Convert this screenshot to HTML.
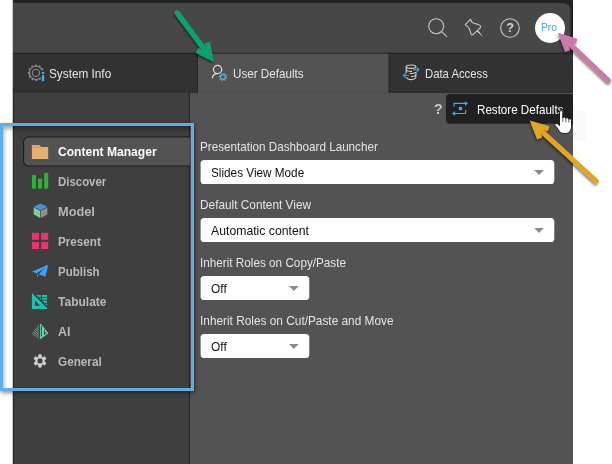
<!DOCTYPE html>
<html><head><meta charset="utf-8">
<style>
*{box-sizing:border-box;margin:0;padding:0}
html,body{width:612px;height:464px;overflow:hidden;background:#fff}
body{position:relative;font-family:"Liberation Sans",sans-serif;font-size:13px}
.a{position:absolute}
.t{position:absolute;white-space:nowrap;line-height:16px;height:16px;transform-origin:0 50%;color:#e4e4e4}
.b{font-weight:bold;color:#b8b8b8}
.k{color:#111}
.sel{position:absolute;left:200px;height:24px;background:#fff;border-radius:4px}
.car{position:absolute;width:0;height:0;border-left:5px solid transparent;border-right:5px solid transparent;border-top:5px solid #8c8c8c}
svg{position:absolute;left:0;top:0;overflow:visible}
</style></head><body>
<svg width="612" height="464" viewBox="0 0 612 464" shape-rendering="auto">
<rect x="12.9" y="0" width="560.1" height="464" fill="#535353"/>
<rect x="12.9" y="0" width="560.1" height="92.7" fill="#222"/>
<path d="M12.9 2.9H563A7.5 7.5 0 0 1 570.5 10.4V52.7H12.9Z" fill="#474747"/>
<rect x="12.9" y="53.7" width="184.4" height="38.05" fill="#323232"/>
<rect x="198" y="53.7" width="190.6" height="39.2" fill="#535353"/>
<rect x="389.4" y="53.7" width="183.6" height="38.05" fill="#323232"/>
<rect x="12.9" y="92.7" width="176" height="371.3" fill="#3f3f3f"/>
<rect x="188.9" y="92.7" width="1" height="371.3" fill="#232323"/>
<rect x="12.9" y="88" width="1.3" height="376" fill="#2a2a2a"/>
<path d="M190.5 137H28.6A5 5 0 0 0 23.6 142V161A5 5 0 0 0 28.6 166H190.5" fill="#535353" stroke="#1c1c1c" stroke-width="1.1"/>
<rect x="189.9" y="137.55" width="1.5" height="27.9" fill="#535353"/>
<g fill="#fff"><rect x="200.6" y="159.95" width="353.7" height="24.15" rx="3.6"/><rect x="200.6" y="217.95" width="353.7" height="24.15" rx="3.6"/><rect x="200.6" y="275.95" width="108.7" height="24.15" rx="3.6"/><rect x="200.6" y="333.95" width="108.7" height="24.15" rx="3.6"/></g>
<g fill="#8c8c8c"><path d="M534.2 169.9H543.9L539.05 174.9Z"/><path d="M534.2 227.9H543.9L539.05 232.9Z"/><path d="M289 285.9H298.8L293.9 290.9Z"/><path d="M289 343.9H298.8L293.9 348.9Z"/></g>
<path d="M573 94.05H450A4 4 0 0 0 446 98.05V119.7A4 4 0 0 0 450 123.7H573Z" fill="#202020"/>
</svg>
<!-- faint box right -->
<div class="a" style="left:573px;top:110px;width:13px;height:31px;background:#fafafa"></div>
<!-- avatar -->
<div class="a" style="left:535px;top:12.5px;width:30.4px;height:30.4px;border-radius:50%;background:#fff"></div>
<div class="t " style="left:48.9px;top:65.5px;transform:scaleX(0.906);">System Info</div>
<div class="t " style="left:232.9px;top:65.5px;transform:scaleX(0.896);">User Defaults</div>
<div class="t " style="left:425px;top:65.5px;transform:scaleX(0.869);">Data Access</div>
<div class="t b" style="left:57.6px;top:143.5px;transform:scaleX(0.929);color:#fff">Content Manager</div>
<div class="t b" style="left:57.5px;top:173.5px;transform:scaleX(0.879);">Discover</div>
<div class="t b" style="left:57.5px;top:203.5px;transform:scaleX(0.983);">Model</div>
<div class="t b" style="left:57.5px;top:233.5px;transform:scaleX(0.897);">Present</div>
<div class="t b" style="left:57.5px;top:263.5px;transform:scaleX(0.887);">Publish</div>
<div class="t b" style="left:57.5px;top:293.5px;transform:scaleX(0.924);">Tabulate</div>
<div class="t b" style="left:57.5px;top:323.5px;transform:scaleX(0.95);">AI</div>
<div class="t b" style="left:57.5px;top:353.5px;transform:scaleX(0.903);">General</div>
<div class="t " style="left:200px;top:138.8px;transform:scaleX(0.898);">Presentation Dashboard Launcher</div>
<div class="t k" style="left:210.7px;top:165.0px;transform:scaleX(0.904);">Slides View Mode</div>
<div class="t " style="left:200px;top:196.8px;transform:scaleX(0.911);">Default Content View</div>
<div class="t k" style="left:210.7px;top:223.0px;transform:scaleX(0.942);">Automatic content</div>
<div class="t " style="left:200px;top:254.8px;transform:scaleX(0.902);">Inherit Roles on Copy/Paste</div>
<div class="t k" style="left:210.7px;top:281.0px;transform:scaleX(0.918);">Off</div>
<div class="t " style="left:200px;top:312.8px;transform:scaleX(0.911);">Inherit Roles on Cut/Paste and Move</div>
<div class="t k" style="left:210.7px;top:339.0px;transform:scaleX(0.918);">Off</div>
<div class="t " style="left:477.2px;top:101.5px;transform:scaleX(0.893);color:#fff">Restore Defaults</div>
<div class="t" style="left:433.6px;top:101.4px;font-weight:bold;color:#c8c8c8;font-size:14.5px;transform:scaleX(0.98)">?</div>
<div class="t" style="left:541px;top:18.8px;color:#3ba0ea;font-size:10.5px;transform:scaleX(0.98)">Pro</div>
<div class="t" style="left:506.3px;top:20px;font-weight:bold;color:#d0d0d0;font-size:12.5px">?</div>
<svg width="612" height="464" viewBox="0 0 612 464">
<defs><filter id="sh" x="-20%" y="-20%" width="140%" height="140%"><feDropShadow dx="-0.5" dy="2" stdDeviation="1.3" flood-color="#000" flood-opacity="0.5"/></filter></defs>
<g fill="none" stroke="#c6c6c6" stroke-width="1.1"><circle cx="436.2" cy="26.2" r="7.5"/><path d="M441.6 31.6L447 36.8"/><circle cx="510" cy="28" r="9.3"/><path d="M470.6 19.4L472.2 22.6Q474.5 23.6 478 24.4Q481.4 25.6 480.4 27.6L472.8 34.8Q471.4 35.2 471 33.8L469.4 29Q468.4 26.4 465.2 24.7Z" stroke-linejoin="round"/></g><path d="M476.9 31.6L478.3 30.6L483 37Z" fill="#d8d8d8"/>
<g fill="none" stroke="#8e8e8e"><circle cx="35.9" cy="72.9" r="3.6" stroke-width="1.1"/><path d="M42.1 70.2A6.6 6.6 0 1 0 40.6 77.6" stroke-width="1.1"/><path d="M42.9 69.9A7.5 7.5 0 1 0 41.1 78.3" stroke-width="1.3" stroke-dasharray="1.9 2.03"/></g><rect x="41.9" y="71.9" width="2.3" height="2.1" fill="#35b4f5"/><rect x="41.9" y="75" width="2.3" height="6.1" fill="#35b4f5"/>
<g fill="none" stroke="#e0e0e0" stroke-width="1.2" stroke-linecap="round"><circle cx="217.6" cy="69.5" r="4.1"/><path d="M212.4 77.9Q212.8 74.3 216.6 73.6"/></g><circle cx="223" cy="77" r="2.5" fill="none" stroke="#5aa5dc" stroke-width="1.5"/><circle cx="223" cy="77" r="3.6" fill="none" stroke="#5aa5dc" stroke-width="1.2" stroke-dasharray="1.4 1.43"/>
<g fill="none" stroke="#d2d2d2" stroke-width="1.1"><ellipse cx="411" cy="66.7" rx="4.8" ry="1.7"/><path d="M406.2 66.8V73.2"/><path d="M406.5 77.4Q407.4 79.6 411 79.6Q415.6 79.5 415.9 77V72"/><path d="M406.2 70Q407.4 71.5 412 71.4"/><path d="M409.6 73.7Q414 73.6 415.9 72.4"/><path d="M411 76.7Q414.6 76.5 415.9 75.4"/></g><g fill="none" stroke="#2aa0e8" stroke-width="1.2" stroke-linejoin="round"><path d="M413 69.6H418.8M416.6 67.2L419 69.6L416.6 72"/><path d="M409.2 75.5H403.6M405.8 73.1L403.4 75.5L405.8 77.9"/></g>
<g fill="none" stroke="#2db3f7" stroke-width="1.15"><path d="M454.1 106.8V103.4H466"/><path d="M465.6 110V113.5H454"/></g><path d="M464.9 101.2L468 103.4L464.9 105.7ZM455.1 111.3L452 113.5L455.1 115.8Z" fill="#2db3f7"/><rect x="458.8" y="106.9" width="3.3" height="3.2" fill="#2db3f7"/>
<path d="M31.9 144.9H39.3L41.2 147H48.2V159H31.9Z" fill="#e5b06f"/><path d="M31.9 147H41" stroke="#b98c55" stroke-width="0.6"/>
<g fill="#2fb23a"><rect x="32" y="175" width="3.9" height="13.7"/><rect x="38" y="178.7" width="4.1" height="10"/><rect x="44.2" y="173" width="4" height="15.7"/></g>
<path d="M40.5 203.4L47.4 206.8L40.5 210.3L33.7 206.8Z" fill="#4a90d9"/><path d="M33.7 207.4L40.2 210.8V218L33.7 214.6Z" fill="#7fc99b"/><path d="M47.4 207.4L40.9 210.8V218L47.4 214.6Z" fill="#909090"/>
<g fill="#e8336d"><rect x="32" y="232.8" width="7" height="7"/><rect x="41.2" y="232.8" width="7" height="7"/><rect x="32" y="242" width="7" height="7"/><rect x="41.2" y="242" width="7" height="7"/></g>
<path d="M48.3 264.8L32 271.6L36.6 273.4L45.2 267.6L38.6 274.3L45.4 276.8Z" fill="#3b9ff5"/><path d="M36.9 274.2L38.4 275L37.1 278Z" fill="#3b9ff5"/>
<path d="M31.9 292.9V309H48ZM35 300.7L40.2 305.8H35Z" fill="#20c1ae" fill-rule="evenodd"/><clipPath id="tc"><path d="M33.7 292.5H49V307.8Z"/></clipPath><g fill="#20c1ae" clip-path="url(#tc)"><rect x="36.5" y="295" width="4.4" height="1.9"/><rect x="42" y="295" width="5.1" height="1.9"/><rect x="36.5" y="297.8" width="4.4" height="1.9"/><rect x="42" y="297.8" width="5.1" height="1.9"/><rect x="36.5" y="300.7" width="4.4" height="2.0"/><rect x="42" y="300.7" width="5.1" height="2.0"/><rect x="36.5" y="303.7" width="4.4" height="1.9"/><rect x="42" y="303.7" width="5.1" height="1.9"/></g>
<path d="M40.2 323.2L48.4 333.2L40.2 339.2Z" fill="#6ce8ba"/><g stroke="#3e3e3e" stroke-width="1"><path d="M41.6 325.8V336.6M44.4 329.4V335M45.9 332V334"/></g><clipPath id="ac"><path d="M39.3 323.4L31.6 333.6L39.3 339.4Z"/></clipPath><g stroke="#a8a8a8" stroke-width="0.8" clip-path="url(#ac)"><path d="M39.3 338.90L27.3 329.90"/><path d="M39.3 336.73L27.3 327.73"/><path d="M39.3 334.56L27.3 325.56"/><path d="M39.3 332.39L27.3 323.39"/><path d="M39.3 330.22L27.3 321.22"/><path d="M39.3 328.05L27.3 319.05"/><path d="M39.3 325.88L27.3 316.88"/><path d="M39.3 323.71L27.3 314.71"/></g>
<path d="M41.50 365.14L41.40 367.15L38.60 367.15L38.50 365.14L37.08 364.32L35.29 365.23L33.89 362.81L35.58 361.72L35.58 360.08L33.89 358.99L35.29 356.57L37.08 357.48L38.50 356.66L38.60 354.65L41.40 354.65L41.50 356.66L42.92 357.48L44.71 356.57L46.11 358.99L44.42 360.08L44.42 361.72L46.11 362.81L44.71 365.23L42.92 364.32Z M42.9 360.9A2.9 2.9 0 1 0 37.1 360.9A2.9 2.9 0 1 0 42.9 360.9Z" fill="#d0d0d0" fill-rule="evenodd" stroke="#d0d0d0" stroke-width="0.6" stroke-linejoin="round"/>
<g filter="url(#sh)"><path d="M207.4 42.5L210.2 57.2L196.9 50.4" fill="none" stroke="#10a073" stroke-width="5.3" stroke-linejoin="miter" stroke-miterlimit="10"/><path d="M209.0 55.6L177.2 12.9" fill="none" stroke="#10a073" stroke-width="5.2" stroke-linecap="round"/></g>
<g filter="url(#sh)"><path d="M539.7 138.5L534.2 124.6L548.6 128.8" fill="none" stroke="#e2a528" stroke-width="5.3" stroke-linejoin="miter" stroke-miterlimit="10"/><path d="M535.7 125.9L596.0 180.8" fill="none" stroke="#e2a528" stroke-width="5.2" stroke-linecap="round"/></g>
<g filter="url(#sh)"><path d="M567.6 51.0L562.3 36.9L576.6 41.4" fill="none" stroke="#cb78ab" stroke-width="5.3" stroke-linejoin="miter" stroke-miterlimit="10"/><path d="M563.8 38.3L608.3 80.3" fill="none" stroke="#cb78ab" stroke-width="5.2" stroke-linecap="round"/></g>
<path d="M559.5 112.2Q559.5 110.5 561.1 110.5Q562.8 110.5 562.8 112.2V118.2Q563 116.9 564.3 117Q565.7 117.1 565.8 118.6Q566.1 117.6 567.3 117.7Q568.7 117.9 568.8 119.4Q569.2 118.5 570.2 118.7Q571.5 119 571.5 120.4V126.8Q571.4 129.6 570.2 131.2Q568.9 133 566.5 133.4H562.8Q560.6 133.2 559.2 131Q557.2 127.8 555 125.3Q554.3 123.8 555.8 123.4Q557.6 123.3 559.5 125.6Z" fill="#fff" stroke="#111" stroke-width="0.9" stroke-linejoin="round"/><path d="M565.8 118.6V122.4M568.8 119.4V122.6M562.8 118.2V122" stroke="#222" stroke-width="0.7" fill="none"/>
</svg>
<div class="a" style="left:0;top:123px;width:194px;height:268px;border:3px solid #5faee6;box-shadow:1px 2px 4px rgba(0,0,0,.45), inset 1px 3px 4px rgba(0,0,0,.33)"></div>
</body></html>
